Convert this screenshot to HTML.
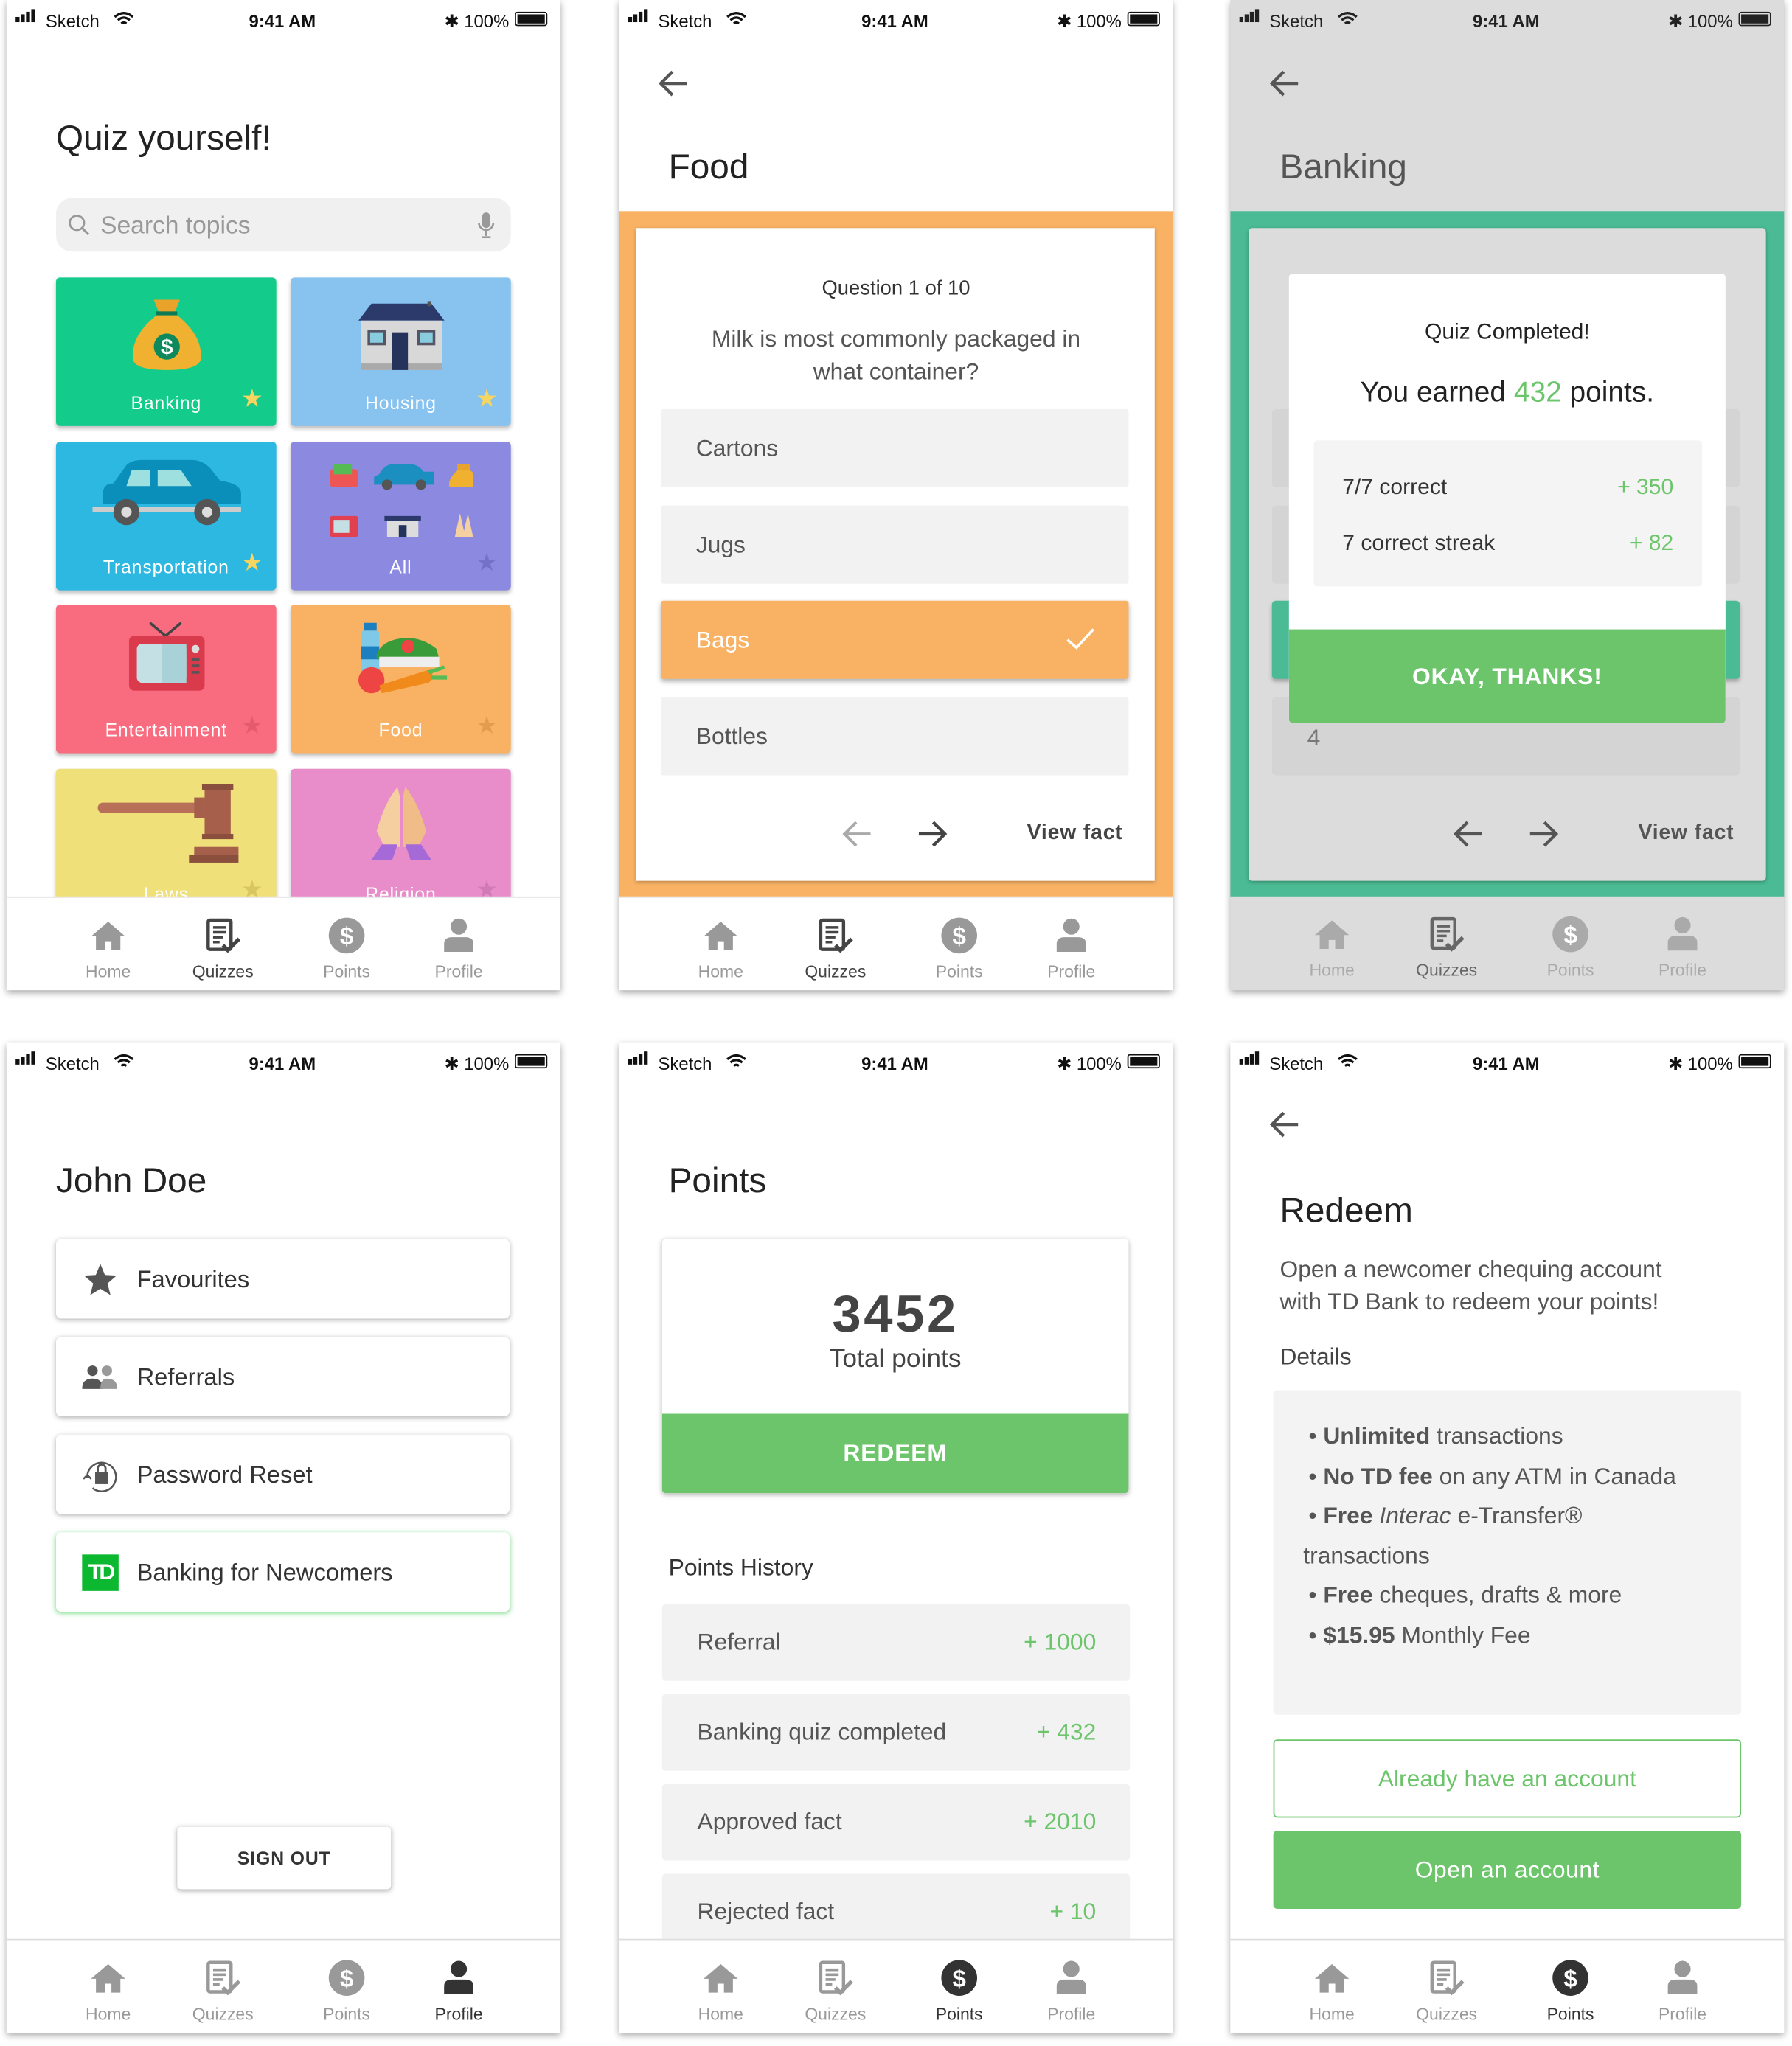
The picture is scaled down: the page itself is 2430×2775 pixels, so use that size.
<!DOCTYPE html>
<html><head><meta charset="utf-8">
<style>
*{margin:0;padding:0;box-sizing:border-box}
html,body{width:2430px;height:2774px;background:#fff;overflow:hidden}
#w{position:absolute;left:0;top:0;width:1375px;height:1570px;transform:scale(1.76727);transform-origin:0 0;font-family:"Liberation Sans",sans-serif;color:#333}
.ph{position:absolute;width:425px;height:760px;background:#fff;box-shadow:0 2px 5px rgba(0,0,0,.35);overflow:hidden}
.a{position:absolute}
.t{position:absolute;line-height:1;white-space:nowrap}
.sb{position:absolute;left:0;top:0;width:425px;height:34px;font-size:13.5px;color:#111}
.tab{position:absolute;left:0;top:688px;width:425px;height:72px;background:#fff;border-top:1px solid #ddd}
.ti{position:absolute;top:14px;width:60px;margin-left:-30px;text-align:center;color:#999;font-size:13px}
.ti svg{display:block;margin:0 auto 5px;width:30px;height:30px}
.ti.on{color:#444}
.tile{position:absolute;width:169px;height:114px;border-radius:3px;box-shadow:0 2px 3px rgba(0,0,0,.25);overflow:hidden}
.tile .l{position:absolute;left:0;right:0;top:88px;text-align:center;color:#fff;font-size:14px;letter-spacing:.5px}
.tile .s{position:absolute;right:10px;top:84px;font-size:19px;line-height:1}
.opt{position:absolute;left:32px;width:359px;height:60px;background:#f2f2f2;border-radius:2px;font-size:18px;color:#555;padding-left:27px;line-height:60px}
.card{position:absolute;left:38px;width:348px;height:61px;background:#fff;border-radius:4px;box-shadow:0 1px 4px rgba(0,0,0,.3);font-size:18.5px;color:#333;line-height:61px;padding-left:62px}
.card .ic{position:absolute;left:20px;top:18px;width:28px;height:26px}
.row{position:absolute;left:33px;width:359px;height:59px;background:#f2f2f2;border-radius:3px;font-size:18px;color:#555;line-height:59px;padding-left:27px}
.row b{position:absolute;right:26px;font-weight:normal;color:#6cc56b}
.g{color:#6cc56b}
</style></head><body><div id="w">

<svg width="0" height="0" style="position:absolute">
<defs>
<symbol id="home" viewBox="0 0 24 24"><path d="M12 3.5 L1.5 12.5 H4.5 V21 H10 V15.5 H14 V21 H19.5 V12.5 H22.5Z" fill="currentColor"/></symbol>
<symbol id="quiz" viewBox="0 0 24 24"><rect x="3" y="2.5" width="14" height="18" rx="1" fill="none" stroke="currentColor" stroke-width="2"/><path d="M6 7h8M6 10h8M6 13h6M6 16h4" stroke="currentColor" stroke-width="1.6"/><path d="M12 18l3 3 7-7" fill="none" stroke="currentColor" stroke-width="2.4"/></symbol>
<symbol id="pts" viewBox="0 0 24 24"><circle cx="12" cy="12" r="11" fill="currentColor"/><text x="12" y="17.5" text-anchor="middle" font-family="Liberation Sans" font-weight="bold" font-size="15" fill="#fff">$</text></symbol>
<symbol id="prof" viewBox="0 0 24 24"><circle cx="12" cy="6.5" r="5" fill="currentColor"/><path d="M3 22 V17 Q3 13 8 13 H16 Q21 13 21 17 V22Z" fill="currentColor"/></symbol>
</defs></svg>

<!-- ============ SCREEN 1 ============ -->
<div class="ph" style="left:5px;top:0">
 <div class="sb">
  <div class="a" style="left:7px;top:13px;width:3px;height:4px;background:#111"></div><div class="a" style="left:11px;top:11px;width:3px;height:6px;background:#111"></div><div class="a" style="left:15px;top:9px;width:3px;height:8px;background:#111"></div><div class="a" style="left:19px;top:7px;width:3px;height:10px;background:#111"></div>
  <div class="t" style="left:30px;top:10px">Sketch</div>
  <svg class="a" style="left:82px;top:9px" width="16" height="11" viewBox="0 0 16 11"><path d="M1 4Q8-2 15 4M3.5 6.5Q8 2.5 12.5 6.5M6 9Q8 7.5 10 9" fill="none" stroke="#111" stroke-width="1.8"/></svg>
  <div class="t" style="left:186px;top:10px;font-weight:bold">9:41 AM</div>
  <div class="t" style="left:336px;top:10px">&#10033; 100%</div>
  <div class="a" style="left:390px;top:9px;width:25px;height:11px;border:1px solid #111;border-radius:2px;padding:1px"><div style="width:100%;height:100%;background:#111"></div></div>
 </div>
 <div class="t" style="left:38px;top:93px;font-size:27px;color:#222">Quiz yourself!</div>
 <div class="a" style="left:38px;top:152px;width:349px;height:41px;background:#f0f0f0;border-radius:12px"></div>
 <svg class="a" style="left:47px;top:164px" width="18" height="18" viewBox="0 0 18 18"><circle cx="7" cy="7" r="5.5" fill="none" stroke="#999" stroke-width="1.6"/><path d="M11 11l5 5" stroke="#999" stroke-width="1.8"/></svg>
 <div class="t" style="left:72px;top:164px;font-size:19px;color:#999">Search topics</div>
 <svg class="a" style="left:361px;top:162px" width="14" height="22" viewBox="0 0 14 22"><rect x="4" y="1" width="6" height="12" rx="3" fill="#999"/><path d="M1.5 9a5.5 5.5 0 0 0 11 0M7 15v4M3.5 20h7" fill="none" stroke="#999" stroke-width="1.5"/></svg>

 <div class="tile" style="left:38px;top:213px;background:#13cc8b">
  <svg class="a" style="left:55px;top:15px" width="60" height="62" viewBox="0 0 60 62"><path d="M20 2h20l-4 10H24z" fill="#e9a22a"/><rect x="22" y="11" width="16" height="3" fill="#0b7a55"/><path d="M22 14Q2 30 4 48Q6 56 30 56Q54 56 56 48Q58 30 38 14z" fill="#f0b030"/><circle cx="30" cy="38" r="10" fill="#0c8a5b"/><text x="30" y="44" text-anchor="middle" font-family="Liberation Sans" font-weight="bold" font-size="17" fill="#fff">$</text></svg>
  <div class="l">Banking</div><div class="s" style="color:#f7d560">★</div></div>
 <div class="tile" style="left:218px;top:213px;background:#88c3f0">
  <svg class="a" style="left:52px;top:18px" width="66" height="60" viewBox="0 0 66 60"><path d="M10 2h46l10 13H0z" fill="#2c3a6b"/><rect x="53" y="0" width="3" height="4" fill="#555"/><rect x="2" y="15" width="62" height="38" fill="#d8d8d8"/><rect x="2" y="48" width="62" height="5" fill="#aaa"/><rect x="26" y="24" width="12" height="29" fill="#24325c"/><rect x="8" y="23" width="12" height="10" fill="#8cd" stroke="#556" stroke-width="2"/><rect x="46" y="23" width="12" height="10" fill="#8cd" stroke="#556" stroke-width="2"/></svg>
  <div class="l">Housing</div><div class="s" style="color:#f7d560">★</div></div>
 <div class="tile" style="left:38px;top:339px;background:#2cb8e1">
  <svg class="a" style="left:28px;top:12px" width="114" height="62" viewBox="0 0 114 62"><path d="M8 28Q8 20 16 20L26 6Q30 2 38 2H76Q84 2 90 8L98 18Q114 20 114 28V36H8z" fill="#0a8fbb"/><path d="M30 10h14v12H26zM50 10h18l8 12H50z" fill="#9ee0e0"/><rect x="0" y="38" width="114" height="4" fill="#ccc"/><circle cx="26" cy="42" r="10" fill="#555"/><circle cx="26" cy="42" r="4" fill="#ddd"/><circle cx="88" cy="42" r="10" fill="#555"/><circle cx="88" cy="42" r="4" fill="#ddd"/></svg>
  <div class="l">Transportation</div><div class="s" style="color:#f7d560">★</div></div>
 <div class="tile" style="left:218px;top:339px;background:#8b89e0">
  <svg class="a" style="left:28px;top:15px" width="112" height="62" viewBox="0 0 112 62"><rect x="2" y="6" width="22" height="14" rx="3" fill="#e55"/><rect x="5" y="2" width="14" height="8" fill="#5b5"/><path d="M40 10Q44 2 52 2H62Q70 2 74 8H82V18H36V12z" fill="#1a8fc0"/><circle cx="46" cy="18" r="4" fill="#555"/><circle cx="72" cy="18" r="4" fill="#555"/><path d="M100 2h10v5h-10z" fill="#e9a22a"/><path d="M100 7Q92 14 94 20H116Q118 14 110 7z" fill="#f0b030"/><rect x="2" y="42" width="22" height="16" rx="2" fill="#e0404f"/><rect x="5" y="45" width="12" height="10" fill="#c5e0e5"/><path d="M44 42h28v4H44z" fill="#2c3a6b"/><rect x="46" y="46" width="24" height="12" fill="#ddd"/><rect x="55" y="49" width="6" height="9" fill="#24325c"/><path d="M98 58l4-18 4 18zM104 58l4-18 4 18z" fill="#f5d0a0"/></svg>
  <div class="l">All</div><div class="s" style="color:#7372c6">★</div></div>
 <div class="tile" style="left:38px;top:464px;background:#f96c80">
  <svg class="a" style="left:54px;top:12px" width="62" height="62" viewBox="0 0 62 62"><path d="M18 2l12 10 12-10" fill="none" stroke="#444" stroke-width="2"/><rect x="2" y="12" width="58" height="42" rx="4" fill="#d93a4c"/><rect x="8" y="18" width="38" height="30" rx="4" fill="#c5e0e5"/><path d="M27 18h19v30H27z" fill="#a9d1d8"/><circle cx="53" cy="22" r="3" fill="#ddd"/><path d="M50 30h6M50 35h6M50 40h6" stroke="#555" stroke-width="2"/></svg>
  <div class="l">Entertainment</div><div class="s" style="color:#e55a6c">★</div></div>
 <div class="tile" style="left:218px;top:464px;background:#f9b264">
  <svg class="a" style="left:50px;top:12px" width="70" height="66" viewBox="0 0 70 66"><rect x="6" y="2" width="10" height="6" fill="#1b7fc0"/><rect x="4" y="8" width="14" height="34" rx="2" fill="#7ec8e8"/><rect x="4" y="20" width="14" height="10" fill="#1b7fc0"/><path d="M16 26Q20 16 34 14Q50 12 62 22L64 30H16z" fill="#3a9b3a"/><circle cx="40" cy="20" r="5" fill="#e44"/><rect x="18" y="28" width="46" height="8" fill="#eee"/><circle cx="12" cy="46" r="10" fill="#e44"/><path d="M18 50L56 38Q62 42 56 48L20 56z" fill="#f08a1a"/><path d="M56 40l12-4M58 44l12 0" stroke="#5b5" stroke-width="3"/></svg>
  <div class="l">Food</div><div class="s" style="color:#e39b4d">★</div></div>
 <div class="tile" style="left:38px;top:590px;background:#f0e07a">
  <svg class="a" style="left:30px;top:12px" width="110" height="62" viewBox="0 0 110 62"><rect x="2" y="14" width="80" height="8" rx="4" fill="#b87058"/><rect x="76" y="10" width="8" height="16" fill="#a55f4a"/><rect x="84" y="2" width="20" height="38" fill="#a55f4a"/><rect x="82" y="0" width="24" height="4" fill="#8a4f3d"/><rect x="82" y="38" width="24" height="4" fill="#8a4f3d"/><rect x="76" y="48" width="38" height="6" fill="#a55f4a"/><rect x="72" y="54" width="44" height="6" fill="#8a4f3d"/></svg>
  <div class="l">Laws</div><div class="s" style="color:#d8c660">★</div></div>
 <div class="tile" style="left:218px;top:590px;background:#e98dca">
  <svg class="a" style="left:60px;top:12px" width="50" height="62" viewBox="0 0 50 62"><path d="M22 2Q12 14 6 36L12 48H24V10z" fill="#f5cfa0"/><path d="M28 2Q38 14 44 36L38 48H26V10z" fill="#f0bd88"/><path d="M2 58L10 46H22L18 58zM48 58L40 46H28L32 58z" fill="#a66ad8"/></svg>
  <div class="l">Religion</div><div class="s" style="color:#d27ab6">★</div></div>

 <div class="tab">
  <div class="ti" style="left:78px"><svg><use href="#home"/></svg>Home</div>
  <div class="ti on" style="left:166px"><svg><use href="#quiz"/></svg>Quizzes</div>
  <div class="ti" style="left:261px"><svg><use href="#pts"/></svg>Points</div>
  <div class="ti" style="left:347px"><svg><use href="#prof"/></svg>Profile</div>
 </div>
</div>

<!-- ============ SCREEN 2 ============ -->
<div class="ph" style="left:475px;top:0">
 <div class="sb">
  <div class="a" style="left:7px;top:13px;width:3px;height:4px;background:#111"></div><div class="a" style="left:11px;top:11px;width:3px;height:6px;background:#111"></div><div class="a" style="left:15px;top:9px;width:3px;height:8px;background:#111"></div><div class="a" style="left:19px;top:7px;width:3px;height:10px;background:#111"></div>
  <div class="t" style="left:30px;top:10px">Sketch</div>
  <svg class="a" style="left:82px;top:9px" width="16" height="11" viewBox="0 0 16 11"><path d="M1 4Q8-2 15 4M3.5 6.5Q8 2.5 12.5 6.5M6 9Q8 7.5 10 9" fill="none" stroke="#111" stroke-width="1.8"/></svg>
  <div class="t" style="left:186px;top:10px;font-weight:bold">9:41 AM</div>
  <div class="t" style="left:336px;top:10px">&#10033; 100%</div>
  <div class="a" style="left:390px;top:9px;width:25px;height:11px;border:1px solid #111;border-radius:2px;padding:1px"><div style="width:100%;height:100%;background:#111"></div></div>
 </div>
 <svg class="a" style="left:30px;top:53px" width="24" height="22" viewBox="0 0 24 22"><path d="M22 11H3M11 2L2 11l9 9" fill="none" stroke="#555" stroke-width="2.4"/></svg>
 <div class="t" style="left:38px;top:115px;font-size:27px;color:#222">Food</div>
 <div class="a" style="left:0;top:162px;width:425px;height:526px;background:#f9b264"></div>
 <div class="a" style="left:13px;top:175px;width:398px;height:501px;background:#fff;box-shadow:0 1px 3px rgba(0,0,0,.25)"></div>
 <div class="t" style="left:0;width:425px;text-align:center;top:214px;font-size:15.5px;color:#333">Question 1 of 10</div>
 <div class="t" style="left:0;width:425px;text-align:center;top:248px;font-size:18px;color:#555;line-height:25px;white-space:normal">Milk is most commonly packaged in<br>what container?</div>
 <div class="opt" style="top:314px">Cartons</div>
 <div class="opt" style="top:388px">Jugs</div>
 <div class="opt" style="top:461px;background:#f9b264;color:#fff;box-shadow:0 2px 4px rgba(0,0,0,.3)">Bags<svg class="a" style="right:26px;top:21px" width="22" height="17" viewBox="0 0 22 17"><path d="M1 9l7 6L21 1" fill="none" stroke="#fff" stroke-width="2"/></svg></div>
 <div class="opt" style="top:535px">Bottles</div>
 <svg class="a" style="left:171px;top:629px" width="24" height="22" viewBox="0 0 24 22"><path d="M22 11H3M11 2L2 11l9 9" fill="none" stroke="#aaa" stroke-width="2.2"/></svg>
 <svg class="a" style="left:228px;top:629px" width="24" height="22" viewBox="0 0 24 22"><path d="M2 11h19M13 2l9 9-9 9" fill="none" stroke="#444" stroke-width="2.4"/></svg>
 <div class="t" style="left:313px;top:632px;font-size:16px;color:#444;font-weight:bold;letter-spacing:.5px">View fact</div>
 <div class="tab">
  <div class="ti" style="left:78px"><svg><use href="#home"/></svg>Home</div>
  <div class="ti on" style="left:166px"><svg><use href="#quiz"/></svg>Quizzes</div>
  <div class="ti" style="left:261px"><svg><use href="#pts"/></svg>Points</div>
  <div class="ti" style="left:347px"><svg><use href="#prof"/></svg>Profile</div>
 </div>
</div>

<!-- ============ SCREEN 3 ============ -->
<div class="ph" style="left:944px;top:0;background:#dcdcdc">
 <div class="sb" style="color:#222">
  <div class="a" style="left:7px;top:13px;width:3px;height:4px;background:#222"></div><div class="a" style="left:11px;top:11px;width:3px;height:6px;background:#222"></div><div class="a" style="left:15px;top:9px;width:3px;height:8px;background:#222"></div><div class="a" style="left:19px;top:7px;width:3px;height:10px;background:#222"></div>
  <div class="t" style="left:30px;top:10px">Sketch</div>
  <svg class="a" style="left:82px;top:9px" width="16" height="11" viewBox="0 0 16 11"><path d="M1 4Q8-2 15 4M3.5 6.5Q8 2.5 12.5 6.5M6 9Q8 7.5 10 9" fill="none" stroke="#222" stroke-width="1.8"/></svg>
  <div class="t" style="left:186px;top:10px;font-weight:bold">9:41 AM</div>
  <div class="t" style="left:336px;top:10px">&#10033; 100%</div>
  <div class="a" style="left:390px;top:9px;width:25px;height:11px;border:1px solid #222;border-radius:2px;padding:1px"><div style="width:100%;height:100%;background:#222"></div></div>
 </div>
 <svg class="a" style="left:30px;top:53px" width="24" height="22" viewBox="0 0 24 22"><path d="M22 11H3M11 2L2 11l9 9" fill="none" stroke="#555" stroke-width="2.4"/></svg>
 <div class="t" style="left:38px;top:115px;font-size:27px;color:#555">Banking</div>
 <div class="a" style="left:0;top:162px;width:425px;height:526px;background:#4abb94"></div>
 <div class="a" style="left:14px;top:175px;width:397px;height:501px;background:#dcdcdc;border-radius:3px;box-shadow:0 1px 3px rgba(0,0,0,.25)"></div>
 <div class="a" style="left:32px;top:314px;width:359px;height:60px;background:#d4d4d4;border-radius:3px"></div>
 <div class="a" style="left:32px;top:388px;width:359px;height:60px;background:#d4d4d4;border-radius:3px"></div>
 <div class="a" style="left:32px;top:461px;width:359px;height:60px;background:#4abb94;border-radius:3px;box-shadow:0 2px 3px rgba(0,0,0,.25)"></div>
 <div class="a" style="left:32px;top:535px;width:359px;height:60px;background:#d4d4d4;border-radius:3px"></div>
 <div class="t" style="left:59px;top:557px;font-size:18px;color:#777">4</div>
 <svg class="a" style="left:171px;top:629px" width="24" height="22" viewBox="0 0 24 22"><path d="M22 11H3M11 2L2 11l9 9" fill="none" stroke="#555" stroke-width="2.4"/></svg>
 <svg class="a" style="left:228px;top:629px" width="24" height="22" viewBox="0 0 24 22"><path d="M2 11h19M13 2l9 9-9 9" fill="none" stroke="#555" stroke-width="2.4"/></svg>
 <div class="t" style="left:313px;top:632px;font-size:16px;color:#555;font-weight:bold;letter-spacing:.5px">View fact</div>
 <div class="a" style="left:45px;top:210px;width:335px;height:345px;background:#fff;border-radius:3px;overflow:hidden">
  <div class="t" style="left:0;width:335px;text-align:center;top:36px;font-size:17px;color:#222">Quiz Completed!</div>
  <div class="t" style="left:0;width:335px;text-align:center;top:80px;font-size:22px;color:#222">You earned <span class="g">432</span> points.</div>
  <div class="a" style="left:19px;top:128px;width:298px;height:112px;background:#f4f4f4;border-radius:3px"></div>
  <div class="t" style="left:41px;top:155px;font-size:17px;color:#333">7/7 correct</div>
  <div class="t" style="right:40px;top:155px;font-size:17px" ><span class="g">+ 350</span></div>
  <div class="t" style="left:41px;top:198px;font-size:17px;color:#333">7 correct streak</div>
  <div class="t" style="right:40px;top:198px;font-size:17px"><span class="g">+ 82</span></div>
  <div class="a" style="left:0;top:273px;width:335px;height:72px;background:#6cc56b;color:#fff;font-weight:bold;font-size:18px;text-align:center;line-height:72px;letter-spacing:.5px">OKAY, THANKS!</div>
 </div>
 <div class="tab" style="background:#dcdcdc;border-top:none">
  <div class="ti" style="left:78px;color:#aaa"><svg><use href="#home"/></svg>Home</div>
  <div class="ti" style="left:166px;color:#666"><svg><use href="#quiz"/></svg>Quizzes</div>
  <div class="ti" style="left:261px;color:#aaa"><svg><use href="#pts"/></svg>Points</div>
  <div class="ti" style="left:347px;color:#aaa"><svg><use href="#prof"/></svg>Profile</div>
 </div>
</div>

<!-- ============ SCREEN 4 ============ -->
<div class="ph" style="left:5px;top:800px">
 <div class="sb">
  <div class="a" style="left:7px;top:13px;width:3px;height:4px;background:#111"></div><div class="a" style="left:11px;top:11px;width:3px;height:6px;background:#111"></div><div class="a" style="left:15px;top:9px;width:3px;height:8px;background:#111"></div><div class="a" style="left:19px;top:7px;width:3px;height:10px;background:#111"></div>
  <div class="t" style="left:30px;top:10px">Sketch</div>
  <svg class="a" style="left:82px;top:9px" width="16" height="11" viewBox="0 0 16 11"><path d="M1 4Q8-2 15 4M3.5 6.5Q8 2.5 12.5 6.5M6 9Q8 7.5 10 9" fill="none" stroke="#111" stroke-width="1.8"/></svg>
  <div class="t" style="left:186px;top:10px;font-weight:bold">9:41 AM</div>
  <div class="t" style="left:336px;top:10px">&#10033; 100%</div>
  <div class="a" style="left:390px;top:9px;width:25px;height:11px;border:1px solid #111;border-radius:2px;padding:1px"><div style="width:100%;height:100%;background:#111"></div></div>
 </div>
 <div class="t" style="left:38px;top:93px;font-size:27px;color:#222">John Doe</div>
 <div class="card" style="top:151px"><svg class="ic" viewBox="0 0 28 26"><path d="M14 1l3.5 8.5 9 .5-7 6 2.3 9L14 20l-7.8 5 2.3-9-7-6 9-.5z" fill="#555"/></svg>Favourites</div>
 <div class="card" style="top:226px"><svg class="ic" viewBox="0 0 28 26"><circle cx="8" cy="8" r="4" fill="#555"/><circle cx="19" cy="8" r="4" fill="#999"/><path d="M0 22Q0 14 8 14Q16 14 16 22z" fill="#555"/><path d="M14 22Q14 14 19 14Q27 14 27 22z" fill="#999"/></svg>Referrals</div>
 <div class="card" style="top:301px"><svg class="ic" viewBox="0 0 28 28" style="top:16px;height:28px"><path d="M8 25A11 11 0 1 0 4 17" fill="none" stroke="#555" stroke-width="1.4"/><path d="M1 18l3-3 3 3" fill="none" stroke="#555" stroke-width="1.4"/><rect x="10" y="13" width="10" height="9" fill="#555"/><path d="M12 13v-3a3 3 0 0 1 6 0v3" fill="none" stroke="#555" stroke-width="1.6"/></svg>Password Reset</div>
 <div class="card" style="top:376px;box-shadow:0 1px 4px rgba(60,200,80,.7)"><div class="ic" style="background:#0bb830;width:28px;height:28px;top:17px;color:#fff;font-weight:bold;font-size:17px;line-height:28px;text-align:center;letter-spacing:-2px">TD</div>Banking for Newcomers</div>
 <div class="a" style="left:131px;top:602px;width:164px;height:48px;border-radius:3px;background:#fff;box-shadow:0 1px 4px rgba(0,0,0,.35);text-align:center;line-height:48px;font-size:14px;font-weight:bold;color:#333;letter-spacing:.5px">SIGN OUT</div>
 <div class="tab">
  <div class="ti" style="left:78px"><svg><use href="#home"/></svg>Home</div>
  <div class="ti" style="left:166px"><svg><use href="#quiz"/></svg>Quizzes</div>
  <div class="ti" style="left:261px"><svg><use href="#pts"/></svg>Points</div>
  <div class="ti on" style="left:347px;color:#333"><svg><use href="#prof"/></svg>Profile</div>
 </div>
</div>

<!-- ============ SCREEN 5 ============ -->
<div class="ph" style="left:475px;top:800px">
 <div class="sb">
  <div class="a" style="left:7px;top:13px;width:3px;height:4px;background:#111"></div><div class="a" style="left:11px;top:11px;width:3px;height:6px;background:#111"></div><div class="a" style="left:15px;top:9px;width:3px;height:8px;background:#111"></div><div class="a" style="left:19px;top:7px;width:3px;height:10px;background:#111"></div>
  <div class="t" style="left:30px;top:10px">Sketch</div>
  <svg class="a" style="left:82px;top:9px" width="16" height="11" viewBox="0 0 16 11"><path d="M1 4Q8-2 15 4M3.5 6.5Q8 2.5 12.5 6.5M6 9Q8 7.5 10 9" fill="none" stroke="#111" stroke-width="1.8"/></svg>
  <div class="t" style="left:186px;top:10px;font-weight:bold">9:41 AM</div>
  <div class="t" style="left:336px;top:10px">&#10033; 100%</div>
  <div class="a" style="left:390px;top:9px;width:25px;height:11px;border:1px solid #111;border-radius:2px;padding:1px"><div style="width:100%;height:100%;background:#111"></div></div>
 </div>
 <div class="t" style="left:38px;top:93px;font-size:27px;color:#222">Points</div>
 <div class="a" style="left:33px;top:151px;width:358px;height:195px;background:#fff;border-radius:3px;box-shadow:0 1px 4px rgba(0,0,0,.3);overflow:hidden">
  <div class="t" style="left:0;width:358px;text-align:center;top:38px;font-size:40px;font-weight:bold;color:#444;letter-spacing:2px">3452</div>
  <div class="t" style="left:0;width:358px;text-align:center;top:82px;font-size:20px;color:#444">Total points</div>
  <div class="a" style="left:0;top:134px;width:358px;height:61px;background:#6cc56b;color:#fff;font-weight:bold;font-size:18px;text-align:center;line-height:61px;letter-spacing:.5px">REDEEM</div>
 </div>
 <div class="t" style="left:38px;top:394px;font-size:18px;color:#333">Points History</div>
 <div class="row" style="top:431px">Referral<b>+ 1000</b></div>
 <div class="row" style="top:500px">Banking quiz completed<b>+ 432</b></div>
 <div class="row" style="top:569px">Approved fact<b>+ 2010</b></div>
 <div class="row" style="top:638px">Rejected fact<b>+ 10</b></div>
 <div class="tab">
  <div class="ti" style="left:78px"><svg><use href="#home"/></svg>Home</div>
  <div class="ti" style="left:166px"><svg><use href="#quiz"/></svg>Quizzes</div>
  <div class="ti on" style="left:261px;color:#333"><svg><use href="#pts"/></svg>Points</div>
  <div class="ti" style="left:347px"><svg><use href="#prof"/></svg>Profile</div>
 </div>
</div>

<!-- ============ SCREEN 6 ============ -->
<div class="ph" style="left:944px;top:800px">
 <div class="sb">
  <div class="a" style="left:7px;top:13px;width:3px;height:4px;background:#111"></div><div class="a" style="left:11px;top:11px;width:3px;height:6px;background:#111"></div><div class="a" style="left:15px;top:9px;width:3px;height:8px;background:#111"></div><div class="a" style="left:19px;top:7px;width:3px;height:10px;background:#111"></div>
  <div class="t" style="left:30px;top:10px">Sketch</div>
  <svg class="a" style="left:82px;top:9px" width="16" height="11" viewBox="0 0 16 11"><path d="M1 4Q8-2 15 4M3.5 6.5Q8 2.5 12.5 6.5M6 9Q8 7.5 10 9" fill="none" stroke="#111" stroke-width="1.8"/></svg>
  <div class="t" style="left:186px;top:10px;font-weight:bold">9:41 AM</div>
  <div class="t" style="left:336px;top:10px">&#10033; 100%</div>
  <div class="a" style="left:390px;top:9px;width:25px;height:11px;border:1px solid #111;border-radius:2px;padding:1px"><div style="width:100%;height:100%;background:#111"></div></div>
 </div>
 <svg class="a" style="left:30px;top:52px" width="24" height="22" viewBox="0 0 24 22"><path d="M22 11H3M11 2L2 11l9 9" fill="none" stroke="#555" stroke-width="2.4"/></svg>
 <div class="t" style="left:38px;top:116px;font-size:27px;color:#222">Redeem</div>
 <div class="t" style="left:38px;top:162px;font-size:18px;color:#555;line-height:25px">Open a newcomer chequing account<br>with TD Bank to redeem your points!</div>
 <div class="t" style="left:38px;top:232px;font-size:18px;color:#444">Details</div>
 <div class="a" style="left:33px;top:267px;width:359px;height:249px;background:#f3f3f3;border-radius:3px"></div>
 <div class="t" style="left:60px;top:287px;font-size:18px;color:#555;line-height:30.6px">• <b>Unlimited</b> transactions<br>• <b>No TD fee</b> on any ATM in Canada<br>• <b>Free</b> <i>Interac</i> e-Transfer®<br><span style="margin-left:-4px">transactions</span><br>• <b>Free</b> cheques, drafts &amp; more<br>• <b>$15.95</b> Monthly Fee</div>
 <div class="a" style="left:33px;top:535px;width:359px;height:60px;border:1px solid #6cc56b;border-radius:3px;color:#6cc56b;font-size:18px;text-align:center;line-height:58px">Already have an account</div>
 <div class="a" style="left:33px;top:605px;width:359px;height:60px;background:#6cc56b;border-radius:3px;color:#fff;font-size:18px;text-align:center;line-height:60px;letter-spacing:.3px">Open an account</div>
 <div class="tab">
  <div class="ti" style="left:78px"><svg><use href="#home"/></svg>Home</div>
  <div class="ti" style="left:166px"><svg><use href="#quiz"/></svg>Quizzes</div>
  <div class="ti on" style="left:261px;color:#333"><svg><use href="#pts"/></svg>Points</div>
  <div class="ti" style="left:347px"><svg><use href="#prof"/></svg>Profile</div>
 </div>
</div>

</div></body></html>
